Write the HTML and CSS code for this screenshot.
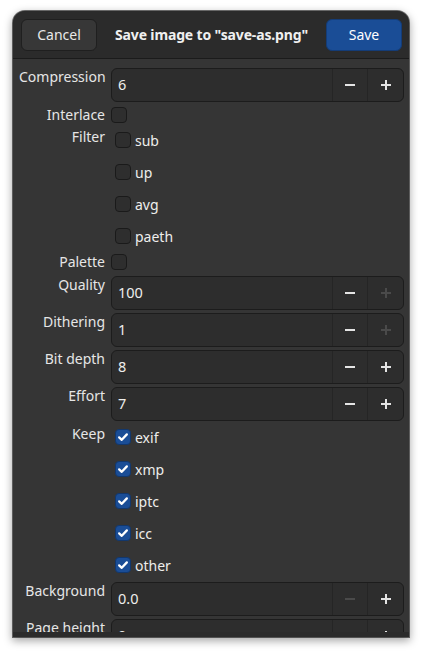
FILE: index.html
```html
<!DOCTYPE html>
<html>
<head>
<meta charset="utf-8">
<link rel="stylesheet" href="styles.css">
</head>
<body>
<div class="dialog">
  <div class="header">
    <button class="btn">Cancel</button>
    <div class="title">Save image to "save-as.png"</div>
    <button class="btn suggested">Save</button>
  </div>
  <div class="content">
    <div class="row entry-row first">
      <div class="label">Compression</div>
      <div class="spin">
        <div class="spin-text">6</div>
        <div class="spin-btn"><svg viewBox="0 0 16 16"><rect x="3" y="7" width="10" height="2"/></svg></div>
        <div class="spin-btn"><svg viewBox="0 0 16 16"><rect x="3" y="7" width="10" height="2"/><rect x="7" y="3" width="2" height="10"/></svg></div>
      </div>
    </div>

    <div class="row check-row">
      <div class="label">Interlace</div>
      <span class="check"></span>
    </div>

    <div class="row list-row">
      <div class="label">Filter</div>
      <div class="check-list">
        <div class="check-item"><span class="check"></span><span>sub</span></div>
        <div class="check-item"><span class="check"></span><span>up</span></div>
        <div class="check-item"><span class="check"></span><span>avg</span></div>
        <div class="check-item"><span class="check"></span><span>paeth</span></div>
      </div>
    </div>

    <div class="row check-row palette">
      <div class="label">Palette</div>
      <span class="check"></span>
    </div>

    <div class="row entry-row">
      <div class="label">Quality</div>
      <div class="spin">
        <div class="spin-text">100</div>
        <div class="spin-btn"><svg viewBox="0 0 16 16"><rect x="3" y="7" width="10" height="2"/></svg></div>
        <div class="spin-btn disabled"><svg viewBox="0 0 16 16"><rect x="3" y="7" width="10" height="2"/><rect x="7" y="3" width="2" height="10"/></svg></div>
      </div>
    </div>

    <div class="row entry-row">
      <div class="label">Dithering</div>
      <div class="spin">
        <div class="spin-text">1</div>
        <div class="spin-btn"><svg viewBox="0 0 16 16"><rect x="3" y="7" width="10" height="2"/></svg></div>
        <div class="spin-btn disabled"><svg viewBox="0 0 16 16"><rect x="3" y="7" width="10" height="2"/><rect x="7" y="3" width="2" height="10"/></svg></div>
      </div>
    </div>

    <div class="row entry-row">
      <div class="label">Bit depth</div>
      <div class="spin">
        <div class="spin-text">8</div>
        <div class="spin-btn"><svg viewBox="0 0 16 16"><rect x="3" y="7" width="10" height="2"/></svg></div>
        <div class="spin-btn"><svg viewBox="0 0 16 16"><rect x="3" y="7" width="10" height="2"/><rect x="7" y="3" width="2" height="10"/></svg></div>
      </div>
    </div>

    <div class="row entry-row">
      <div class="label">Effort</div>
      <div class="spin">
        <div class="spin-text">7</div>
        <div class="spin-btn"><svg viewBox="0 0 16 16"><rect x="3" y="7" width="10" height="2"/></svg></div>
        <div class="spin-btn"><svg viewBox="0 0 16 16"><rect x="3" y="7" width="10" height="2"/><rect x="7" y="3" width="2" height="10"/></svg></div>
      </div>
    </div>

    <div class="row list-row keep">
      <div class="label">Keep</div>
      <div class="check-list">
        <div class="check-item"><span class="check checked"><svg viewBox="0 0 16 16"><path d="M3.6 8.4 L6.6 11.2 L12.4 5"/></svg></span><span>exif</span></div>
        <div class="check-item"><span class="check checked"><svg viewBox="0 0 16 16"><path d="M3.6 8.4 L6.6 11.2 L12.4 5"/></svg></span><span>xmp</span></div>
        <div class="check-item"><span class="check checked"><svg viewBox="0 0 16 16"><path d="M3.6 8.4 L6.6 11.2 L12.4 5"/></svg></span><span>iptc</span></div>
        <div class="check-item"><span class="check checked"><svg viewBox="0 0 16 16"><path d="M3.6 8.4 L6.6 11.2 L12.4 5"/></svg></span><span>icc</span></div>
        <div class="check-item"><span class="check checked"><svg viewBox="0 0 16 16"><path d="M3.6 8.4 L6.6 11.2 L12.4 5"/></svg></span><span>other</span></div>
      </div>
    </div>

    <div class="row entry-row background">
      <div class="label">Background</div>
      <div class="spin">
        <div class="spin-text">0.0</div>
        <div class="spin-btn disabled"><svg viewBox="0 0 16 16"><rect x="3" y="7" width="10" height="2"/></svg></div>
        <div class="spin-btn"><svg viewBox="0 0 16 16"><rect x="3" y="7" width="10" height="2"/><rect x="7" y="3" width="2" height="10"/></svg></div>
      </div>
    </div>

    <div class="row entry-row">
      <div class="label">Page height</div>
      <div class="spin">
        <div class="spin-text">0</div>
        <div class="spin-btn"><svg viewBox="0 0 16 16"><rect x="3" y="7" width="10" height="2"/></svg></div>
        <div class="spin-btn"><svg viewBox="0 0 16 16"><rect x="3" y="7" width="10" height="2"/><rect x="7" y="3" width="2" height="10"/></svg></div>
      </div>
    </div>
  </div>
  <div class="footer"></div>
</div>
</body>
</html>
```

FILE: styles.css
```css
html, body {
  margin: 0;
  padding: 0;
  background: #ffffff;
}

body {
  font-family: "Noto Sans", "DejaVu Sans", sans-serif;
  font-size: 14px;
  color: #eeeeec;
  padding: 11px 0 0 13px;
  height: 654px;
  box-sizing: border-box;
  overflow: hidden;
}

.dialog {
  width: 396px;
  height: 626px;
  border-radius: 12px 12px 0 0;
  overflow: hidden;
  background: #353535;
  box-shadow: 0 0 0 1px rgba(0, 0, 0, 0.55), 0 3px 9px 1px rgba(0, 0, 0, 0.35);
  display: flex;
  flex-direction: column;
}

.header {
  height: 47px;
  flex: none;
  background: #2b2b2b;
  border-bottom: 1px solid #1b1b1b;
  display: flex;
  align-items: center;
  justify-content: space-between;
  padding: 0 7px 0 8px;
}

.btn {
  width: 76px;
  height: 32px;
  border-radius: 6px;
  border: 1px solid #1f1f1f;
  background: #373737;
  color: #e8e8e8;
  font-family: inherit;
  font-size: 14px;
  padding: 0;
}

.btn.suggested {
  background: #1a4d96;
  border-color: #143c77;
  color: #ffffff;
}

.title {
  font-weight: bold;
  font-size: 14px;
  letter-spacing: -0.15px;
  color: #f0f0f0;
}

.content {
  flex: 1;
  overflow: hidden;
  padding: 9px 5px 0 6px;
  display: flex;
  flex-direction: column;
}

.footer {
  height: 5px;
  flex: none;
  background: #2b2b2b;
}

.row {
  display: flex;
  align-items: flex-start;
  column-gap: 6px;
  flex: none;
}

.label {
  width: 86px;
  flex: none;
  text-align: right;
  line-height: 18px;
  white-space: nowrap;
  color: #e6e6e6;
}

.entry-row {
  margin-top: 3px;
}

.entry-row.first {
  margin-top: 0;
}

.spin {
  width: 293px;
  height: 34px;
  box-sizing: border-box;
  border: 1px solid #1c1c1c;
  border-radius: 6px;
  background: #2d2d2d;
  display: flex;
  align-items: stretch;
}

.spin-text {
  flex: 1;
  padding-left: 6px;
  padding-bottom: 2px;
  display: flex;
  align-items: center;
  font-size: 14.5px;
  color: #eeeeec;
}

.spin-btn {
  width: 34px;
  border-left: 1px solid #252525;
  display: flex;
  align-items: center;
  justify-content: center;
  fill: #e4e4e4;
}

.spin-btn:last-child {
  width: 35px;
}

.spin-btn.disabled {
  fill: #4a4a4a;
}

.spin-btn svg {
  width: 16px;
  height: 16px;
}

.check-row {
  margin-top: 3px;
  height: 20px;
  align-items: center;
}

.check-row.palette {
  height: 22px;
}

.check {
  width: 16px;
  height: 16px;
  box-sizing: border-box;
  border: 1px solid #1a1a1a;
  border-radius: 4px;
  background: #2e2e2e;
  flex: none;
  display: flex;
  align-items: center;
  justify-content: center;
}

.check.checked {
  background: #1a4d96;
  border-color: #12376c;
}

.check svg {
  width: 16px;
  height: 16px;
  fill: none;
  stroke: #ffffff;
  stroke-width: 2.6;
  stroke-linecap: round;
  stroke-linejoin: round;
}

.list-row {
  margin-top: 3px;
}

.list-row.keep {
  margin-top: 4px;
}

.entry-row.background {
  margin-top: 5px;
}

.check-list {
  display: flex;
  flex-direction: column;
  row-gap: 8px;
}

.check-item {
  height: 24px;
  display: flex;
  align-items: center;
  column-gap: 4px;
  padding-left: 4px;
  line-height: 18px;
}

.check-item span:last-child {
  padding-top: 2px;
}
```
